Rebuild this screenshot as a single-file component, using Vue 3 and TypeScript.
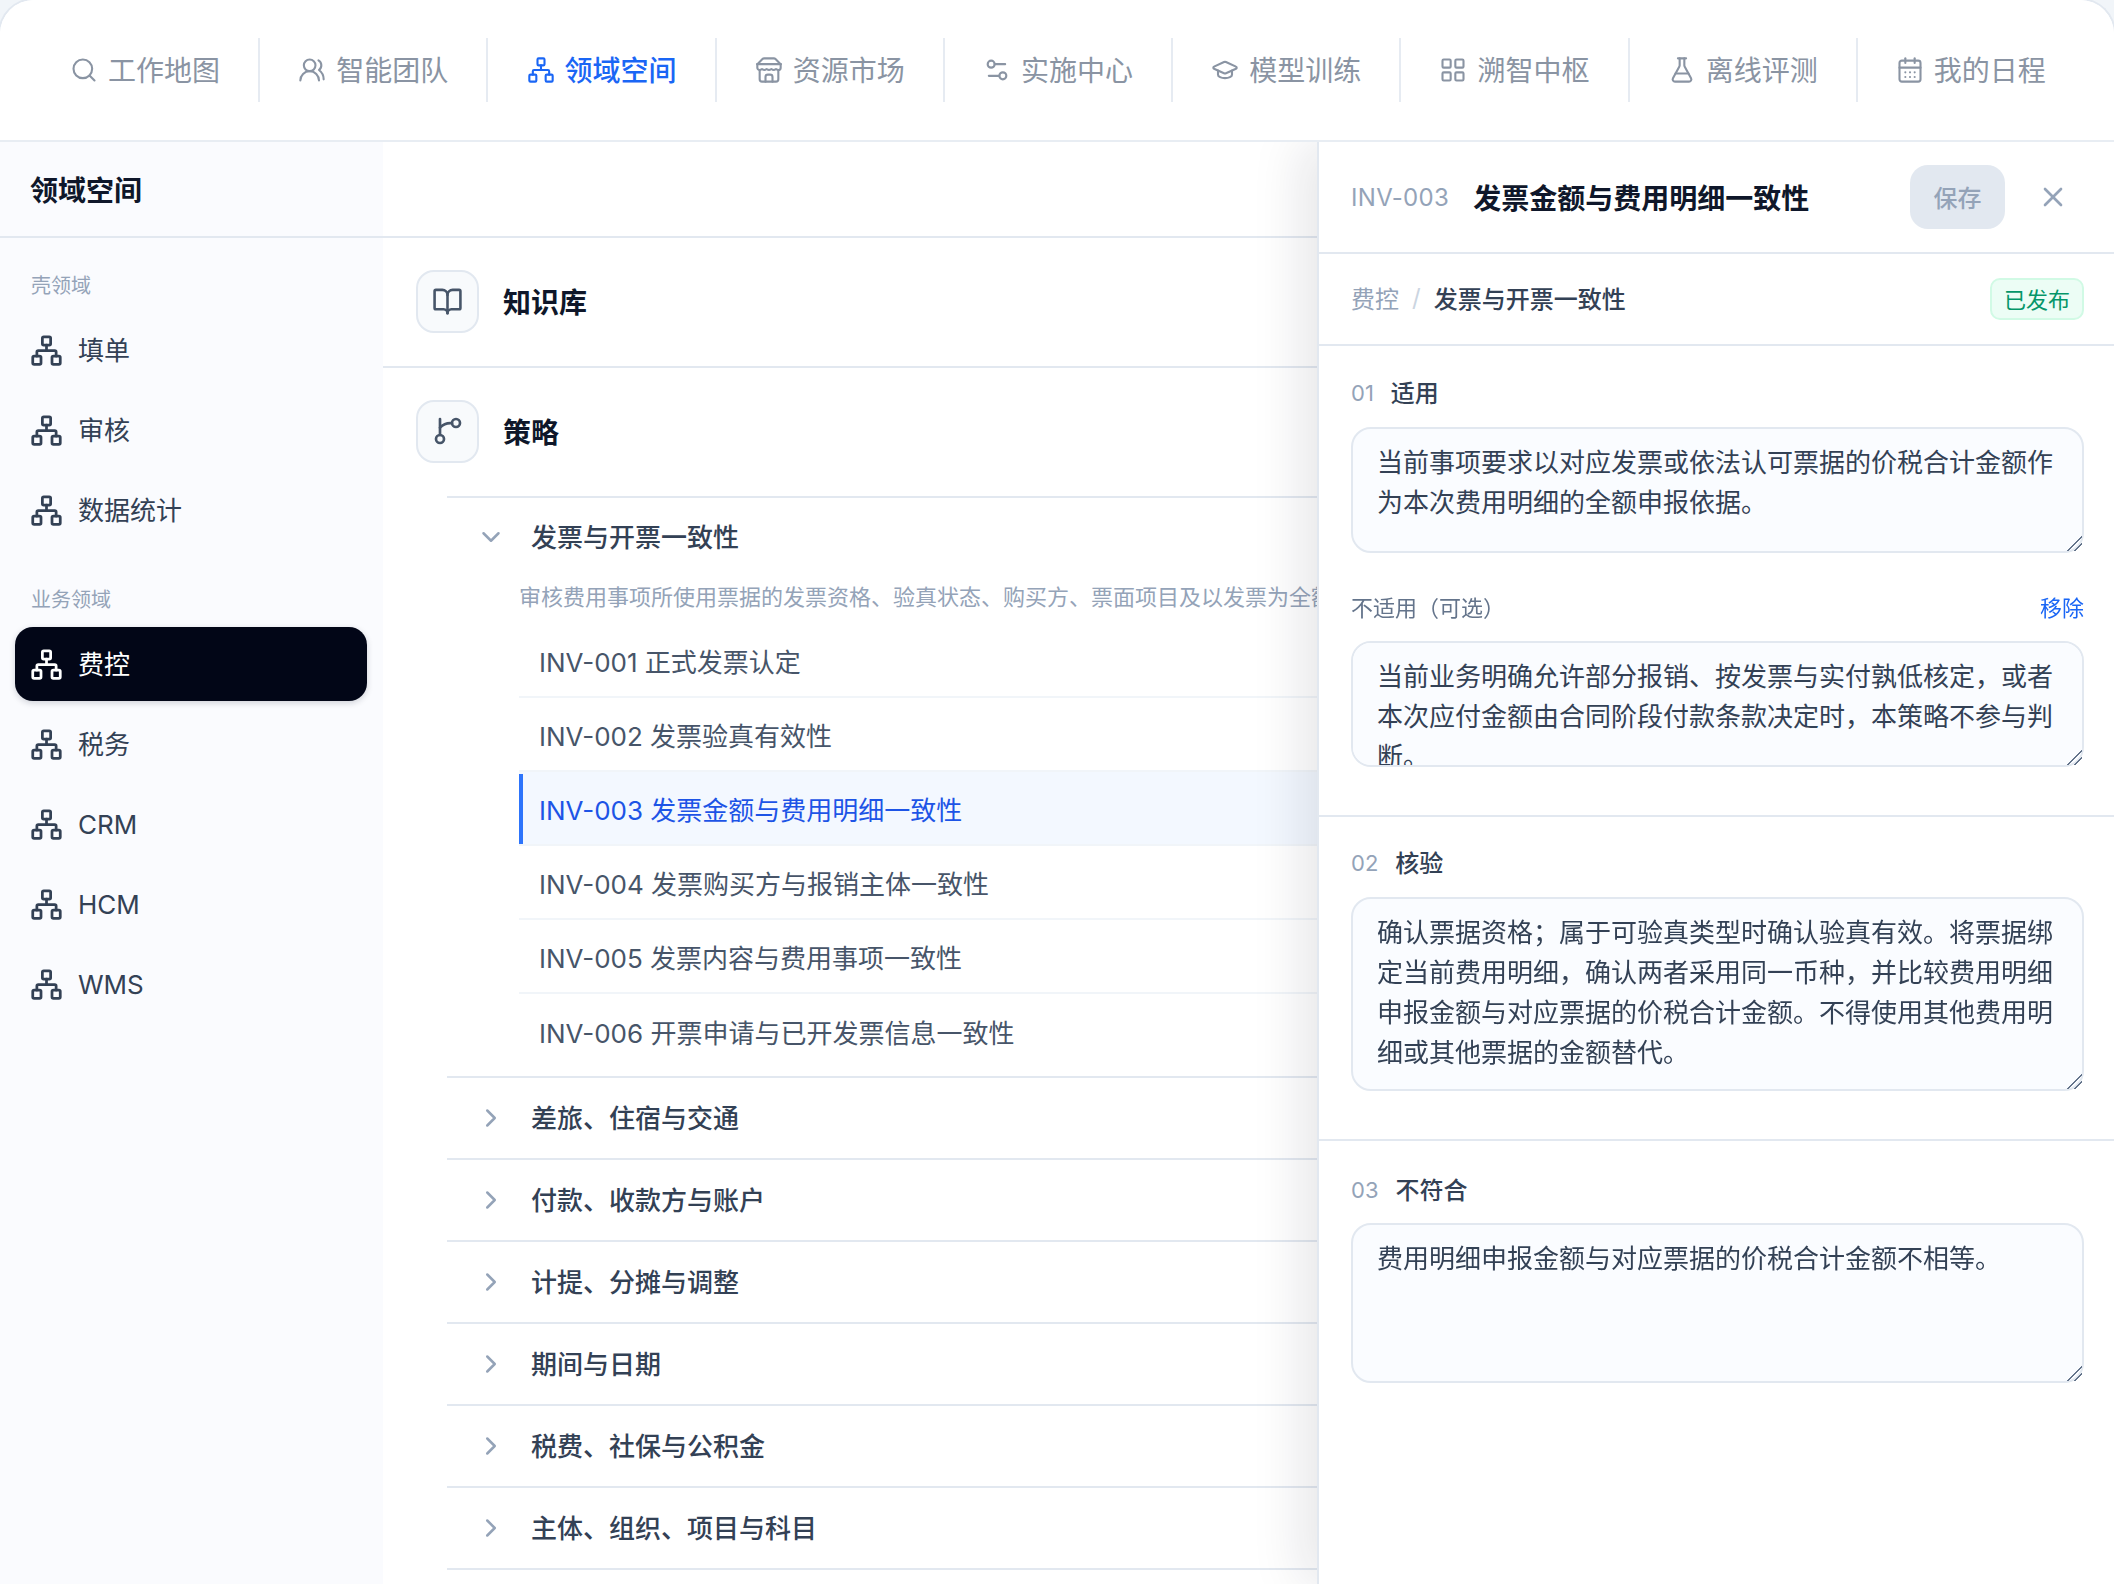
<script setup lang="ts">
import { ref } from 'vue';

interface NavItem {
  label: string;
  icon: string;
  active?: boolean;
}

// lucide-style inner markup, all on a 24 grid
const icons: Record<string, string> = {
  search: '<circle cx="11" cy="11" r="8"/><path d="m21 21-4.3-4.3"/>',
  users:
    '<path d="M18 21a8 8 0 0 0-16 0"/><circle cx="10" cy="8" r="5"/><path d="M22 20c0-3.37-2-6.5-4-8a5 5 0 0 0-.45-8.3"/>',
  network:
    '<rect x="16" y="16" width="6" height="6" rx="1"/><rect x="2" y="16" width="6" height="6" rx="1"/><rect x="9" y="2" width="6" height="6" rx="1"/><path d="M5 16v-3a1 1 0 0 1 1-1h12a1 1 0 0 1 1 1v3"/><path d="M12 12V8"/>',
  store:
    '<path d="m2 7 4.41-4.41A2 2 0 0 1 7.83 2h8.34a2 2 0 0 1 1.42.59L22 7"/><path d="M4 12v8a2 2 0 0 0 2 2h12a2 2 0 0 0 2-2v-8"/><path d="M15 22v-4a2 2 0 0 0-2-2h-2a2 2 0 0 0-2 2v4"/><path d="M2 7h20"/><path d="M22 7v3a2 2 0 0 1-2 2a2.7 2.7 0 0 1-1.59-.63.7.7 0 0 0-.82 0A2.7 2.7 0 0 1 16 12a2.7 2.7 0 0 1-1.59-.63.7.7 0 0 0-.82 0A2.7 2.7 0 0 1 12 12a2.7 2.7 0 0 1-1.59-.63.7.7 0 0 0-.82 0A2.7 2.7 0 0 1 8 12a2.7 2.7 0 0 1-1.59-.63.7.7 0 0 0-.82 0A2.7 2.7 0 0 1 4 12a2 2 0 0 1-2-2V7"/>',
  settings:
    '<path d="M14 17H5"/><path d="M19 7h-9"/><circle cx="17" cy="17" r="3"/><circle cx="7" cy="7" r="3"/>',
  cap: '<path d="M21.42 10.922a1 1 0 0 0-.019-1.838L12.83 5.18a2 2 0 0 0-1.66 0L2.6 9.08a1 1 0 0 0 0 1.832l8.57 3.908a2 2 0 0 0 1.66 0z"/><path d="M6 12.5V16a6 3 0 0 0 12 0v-3.5"/>',
  grid: '<rect x="3" y="3" width="7" height="7" rx="1"/><rect x="14" y="3" width="7" height="7" rx="1"/><rect x="14" y="14" width="7" height="7" rx="1"/><rect x="3" y="14" width="7" height="7" rx="1"/>',
  flask:
    '<path d="M14 2v6a2 2 0 0 0 .245.96l5.51 10.08A2 2 0 0 1 18 22H6a2 2 0 0 1-1.755-2.96l5.51-10.08A2 2 0 0 0 10 8V2"/><path d="M6.453 15h11.094"/><path d="M8.5 2h7"/>',
  calendar:
    '<path d="M8 2v4"/><path d="M16 2v4"/><rect x="3" y="4" width="18" height="18" rx="2"/><path d="M3 10h18"/><path d="M8 14h.01"/><path d="M12 14h.01"/><path d="M16 14h.01"/><path d="M8 18h.01"/><path d="M12 18h.01"/><path d="M16 18h.01"/>',
  book: '<path d="M12 7v14"/><path d="M3 18a1 1 0 0 1-1-1V4a1 1 0 0 1 1-1h5a4 4 0 0 1 4 4 4 4 0 0 1 4-4h5a1 1 0 0 1 1 1v13a1 1 0 0 1-1 1h-6a3 3 0 0 0-3 3 3 3 0 0 0-3-3z"/>',
  branch:
    '<path d="M6 3v12"/><circle cx="6" cy="18" r="3"/><circle cx="18" cy="6" r="3"/><path d="M15 6.2A11 11 0 0 0 6 9.5"/>',
  down: '<path d="m6 9 6 6 6-6"/>',
  right: '<path d="m9 18 6-6-6-6"/>',
  close: '<path d="M18 6 6 18"/><path d="m6 6 12 12"/>',
};

const nav: NavItem[] = [
  { label: '工作地图', icon: 'search' },
  { label: '智能团队', icon: 'users' },
  { label: '领域空间', icon: 'network', active: true },
  { label: '资源市场', icon: 'store' },
  { label: '实施中心', icon: 'settings' },
  { label: '模型训练', icon: 'cap' },
  { label: '溯智中枢', icon: 'grid' },
  { label: '离线评测', icon: 'flask' },
  { label: '我的日程', icon: 'calendar' },
];

const domainGroups = [
  { title: '壳领域', items: ['填单', '审核', '数据统计'] },
  { title: '业务领域', items: ['费控', '税务', 'CRM', 'HCM', 'WMS'] },
];
const currentDomain = ref('费控');
const isLatin = (name: string): boolean => /^[A-Z]+$/.test(name);

const rules = [
  'INV-001 正式发票认定',
  'INV-002 发票验真有效性',
  'INV-003 发票金额与费用明细一致性',
  'INV-004 发票购买方与报销主体一致性',
  'INV-005 发票内容与费用事项一致性',
  'INV-006 开票申请与已开发票信息一致性',
];
const currentRule = ref('INV-003 发票金额与费用明细一致性');

const collapsed = [
  '差旅、住宿与交通',
  '付款、收款方与账户',
  '计提、分摊与调整',
  '期间与日期',
  '税费、社保与公积金',
  '主体、组织、项目与科目',
];

const applicable = ref(
  '当前事项要求以对应发票或依法认可票据的价税合计金额作为本次费用明细的全额申报依据。',
);
const notApplicable = ref(
  '当前业务明确允许部分报销、按发票与实付孰低核定，或者本次应付金额由合同阶段付款条款决定时，本策略不参与判断。',
);
const verify = ref(
  '确认票据资格；属于可验真类型时确认验真有效。将票据绑定当前费用明细，确认两者采用同一币种，并比较费用明细申报金额与对应票据的价税合计金额。不得使用其他费用明细或其他票据的金额替代。',
);
const mismatch = ref('费用明细申报金额与对应票据的价税合计金额不相等。');
</script>

<template>
  <div class="frame">
    <header class="topbar">
      <div v-for="item in nav" :key="item.label" class="nav-item" :class="{ active: item.active }">
        <svg class="nav-icon" viewBox="0 0 24 24" v-html="icons[item.icon]" />
        <span class="nav-text">{{ item.label }}</span>
      </div>
    </header>

    <div class="body">
      <aside class="sidebar">
        <div class="side-title">领域空间</div>
        <div class="side-groups">
          <div v-for="group in domainGroups" :key="group.title" class="side-group">
            <div class="side-label">{{ group.title }}</div>
            <div
              v-for="name in group.items"
              :key="name"
              class="side-item"
              :class="{ active: name === currentDomain }"
            >
              <svg class="side-icon" viewBox="0 0 24 24" v-html="icons.network" />
              <span :class="{ 'cjk-lift': !isLatin(name) }">{{ name }}</span>
            </div>
          </div>
        </div>
      </aside>

      <main class="main">
        <div class="toolbar" />
        <div class="kind-row">
          <span class="kind-box"><svg class="book" viewBox="0 0 24 24" v-html="icons.book" /></span>
          <span class="kind-name">知识库</span>
        </div>
        <div class="kind-row no-line">
          <span class="kind-box"><svg class="branch" viewBox="0 0 24 24" v-html="icons.branch" /></span>
          <span class="kind-name">策略</span>
        </div>

        <div class="tree">
          <div class="tree-group open">
            <div class="tree-head">
              <svg class="chevron" viewBox="0 0 24 24" v-html="icons.down" />
              <span class="cjk-lift">发票与开票一致性</span>
            </div>
            <div class="tree-desc">审核费用事项所使用票据的发票资格、验真状态、购买方、票面项目及以发票为全额</div>
            <div class="rule-list">
              <div
                v-for="rule in rules"
                :key="rule"
                class="rule"
                :class="{ active: rule === currentRule }"
              >
                {{ rule }}
              </div>
            </div>
          </div>
          <div v-for="name in collapsed" :key="name" class="tree-group">
            <div class="tree-head">
              <svg class="chevron" viewBox="0 0 24 24" v-html="icons.right" />
              <span class="cjk-lift">{{ name }}</span>
            </div>
          </div>
        </div>
      </main>

      <section class="panel">
        <div class="panel-head">
          <span class="panel-code">INV-003</span>
          <span class="panel-title">发票金额与费用明细一致性</span>
          <button class="save" disabled>保存</button>
          <svg class="close" viewBox="0 0 24 24" v-html="icons.close" />
        </div>
        <div class="crumbs">
          <span class="crumb-root cjk-lift">费控</span>
          <span class="crumb-sep cjk-lift">/</span>
          <span class="crumb-leaf cjk-lift">发票与开票一致性</span>
          <span class="badge">已发布</span>
        </div>

        <div class="sec">
          <div class="sec-label"><span class="sec-no">01</span><span class="sec-name">适用</span></div>
          <textarea v-model="applicable" class="field short" />
          <div class="opt-label">
            <span class="cjk-lift">不适用（可选）</span><span class="remove cjk-lift">移除</span>
          </div>
          <textarea v-model="notApplicable" class="field short" />
        </div>
        <div class="sec">
          <div class="sec-label"><span class="sec-no">02</span><span class="sec-name">核验</span></div>
          <textarea v-model="verify" class="field tall" />
        </div>
        <div class="sec last">
          <div class="sec-label"><span class="sec-no">03</span><span class="sec-name">不符合</span></div>
          <textarea v-model="mismatch" class="field mid" />
        </div>
      </section>
    </div>
  </div>
</template>

<style>
html,
body {
  margin: 0;
  background: #f1f5f9;
  overflow: hidden;
}
</style>

<style scoped>
* {
  box-sizing: border-box;
}
svg {
  fill: none;
  stroke: currentColor;
  stroke-width: 2;
  stroke-linecap: round;
  stroke-linejoin: round;
  flex: none;
  display: block;
}
/* Noto's CJK glyphs sit lower on Inter's baseline than the original face */
.cjk-lift {
  margin-bottom: 4px;
}
.frame {
  margin: -2px -2px 0;
  height: 1586px;
  display: flex;
  flex-direction: column;
  overflow: hidden;
  background: #fff;
  border: 2px solid #e2e8f0;
  border-bottom: 0;
  border-radius: 36px 36px 0 0;
  font-family: Inter, 'Noto Sans CJK SC', sans-serif;
  color: #334155;
}
.topbar {
  position: relative;
  z-index: 3;
  flex: none;
  height: 142px;
  padding: 0 30px 0 32px;
  display: flex;
  align-items: center;
  background: #fff;
  border-bottom: 2px solid #e8edf3;
}
.nav-item {
  flex: 1;
  height: 64px;
  display: flex;
  align-items: center;
  justify-content: center;
  gap: 10px;
  font-size: 28px;
  color: #8a94a3;
  border-right: 2px solid #e6ebf2;
}
.nav-item:last-child {
  border-right: 0;
}
.nav-item.active {
  color: #1a66f5;
  font-weight: 500;
}
.nav-text {
  margin-bottom: 2px;
}
.nav-icon {
  width: 28px;
  height: 28px;
  stroke-width: 1.8;
}
.body {
  flex: 1;
  min-height: 0;
  display: flex;
}
.sidebar {
  flex: none;
  width: 383px;
  background: #fafbfe;
}
.side-title {
  height: 96px;
  padding-left: 30px;
  display: flex;
  align-items: center;
  font-size: 28px;
  font-weight: 600;
  color: #0f172a;
  border-bottom: 2px solid #e2e8f0;
}
.side-groups {
  padding: 34px 16px 0 15px;
  display: flex;
  flex-direction: column;
  gap: 39px;
}
.side-group {
  display: flex;
  flex-direction: column;
  gap: 6px;
}
.side-label {
  height: 28px;
  line-height: 28px;
  margin-bottom: 7px;
  padding-left: 16px;
  font-size: 20px;
  color: #94a3b8;
}
.side-item {
  height: 74px;
  padding-left: 15px;
  display: flex;
  align-items: center;
  gap: 15px;
  border-radius: 18px;
  font-size: 26px;
  color: #334155;
}
.side-item.active {
  background: #020617;
  color: #fff;
  box-shadow: 0 2px 6px rgba(15, 23, 42, 0.18);
}
.side-icon {
  width: 33px;
  height: 33px;
  stroke-width: 2;
}
.main {
  flex: 1;
  min-width: 0;
  overflow: hidden;
}
.toolbar {
  height: 96px;
  border-bottom: 2px solid #e2e8f0;
}
.kind-row {
  height: 130px;
  padding: 0 0 2px 33px;
  display: flex;
  align-items: center;
  gap: 24px;
  border-bottom: 2px solid #e2e8f0;
}
.kind-row.no-line {
  border-bottom: 0;
  height: 128px;
}
.kind-box {
  width: 63px;
  height: 63px;
  display: flex;
  align-items: center;
  justify-content: center;
  background: #f8fafc;
  border: 2px solid #e2e8f0;
  border-radius: 18px;
  color: #475569;
}
.book {
  width: 31px;
  height: 31px;
}
.branch {
  width: 32px;
  height: 32px;
}
.kind-name {
  font-size: 28px;
  font-weight: 600;
  color: #0f172a;
}
.tree {
  margin-left: 64px;
  border-top: 2px solid #e2e8f0;
}
.tree-group {
  border-bottom: 2px solid #e2e8f0;
}
.tree-group.open {
  padding-bottom: 8px;
}
.tree-head {
  height: 80px;
  padding-left: 29px;
  display: flex;
  align-items: center;
  gap: 25px;
  font-size: 26px;
  font-weight: 500;
  color: #334155;
}
.tree-group.open .tree-head {
  height: 78px;
}
.chevron {
  width: 30px;
  height: 30px;
  color: #94a3b8;
}
.tree-desc {
  height: 48px;
  line-height: 42px;
  margin-left: 72px;
  font-size: 22px;
  color: #94a3b8;
  white-space: nowrap;
}
.rule-list {
  margin-left: 72px;
}
.rule {
  position: relative;
  height: 74px;
  padding-left: 20px;
  display: flex;
  align-items: center;
  font-size: 26px;
  color: #475569;
  border-bottom: 2px solid #f1f5f9;
  white-space: nowrap;
}
.rule:last-child {
  border-bottom: 0;
}
.rule.active {
  background: #f3f8ff;
  color: #1d54e6;
}
.rule.active::before {
  content: '';
  position: absolute;
  left: 0;
  top: 2px;
  bottom: 0;
  width: 4px;
  background: #2d74fb;
}
.panel {
  position: relative;
  z-index: 2;
  flex: none;
  width: 797px;
  background: #fff;
  border-left: 2px solid #e2e8f0;
  box-shadow: -16px 0 48px rgba(15, 23, 42, 0.1);
}
.panel-head {
  height: 112px;
  padding: 0 45px 0 32px;
  display: flex;
  align-items: center;
  border-bottom: 2px solid #e2e8f0;
}
.panel-code {
  font-size: 24px;
  letter-spacing: 0.3px;
  color: #94a3b8;
}
.panel-title {
  margin-left: 24px;
  font-size: 28px;
  font-weight: 600;
  color: #0f172a;
}
.save {
  margin-left: auto;
  width: 95px;
  height: 64px;
  padding: 0 0 2px;
  border: 0;
  border-radius: 18px;
  background: #e2e8f0;
  color: #94a3b8;
  font-family: inherit;
  font-size: 24px;
  font-weight: 500;
}
.close {
  margin-left: 32px;
  width: 32px;
  height: 32px;
  color: #94a3b8;
}
.crumbs {
  height: 92px;
  padding: 0 30px 0 32px;
  display: flex;
  align-items: center;
  font-size: 24px;
  border-bottom: 2px solid #e2e8f0;
}
.crumb-root {
  color: #94a3b8;
}
.crumb-sep {
  margin: 0 13px 4px;
  color: #cbd5e1;
}
.crumb-leaf {
  font-weight: 500;
  color: #334155;
}
.badge {
  margin-left: auto;
  height: 42px;
  padding: 0 12px 2px;
  display: flex;
  align-items: center;
  background: #ecfdf5;
  border: 2px solid #d1fae5;
  border-radius: 10px;
  font-size: 22px;
  color: #059669;
}
.sec {
  padding: 31px 30px 48px 32px;
  border-bottom: 2px solid #e2e8f0;
}
.sec + .sec {
  padding-top: 30px;
}
.sec.last {
  padding-top: 33px;
  border-bottom: 0;
}
.sec-label {
  height: 32px;
  margin-bottom: 18px;
  display: flex;
  align-items: center;
  gap: 17px;
  font-size: 24px;
  font-weight: 500;
  color: #334155;
}
.sec.last .sec-label {
  margin-bottom: 17px;
}
.sec-no {
  font-size: 22px;
  font-weight: 400;
  color: #94a3b8;
}
.sec-name {
  margin-bottom: 3px;
}
.opt-label {
  height: 32px;
  margin: 39px 0 17px;
  display: flex;
  align-items: center;
  justify-content: space-between;
  font-size: 22px;
  color: #64748b;
}
.remove {
  color: #1a66f5;
}
.field {
  display: block;
  width: 100%;
  padding: 14px 24px;
  background: #fafcff;
  border: 2px solid #e2e8f0;
  border-radius: 20px;
  font-family: inherit;
  font-size: 26px;
  line-height: 40px;
  color: #334155;
  outline: none;
  scrollbar-width: none;
}
.field::-webkit-resizer {
  background: linear-gradient(
    135deg,
    transparent 47%,
    #64748b 48%,
    #64748b 54%,
    transparent 55%,
    transparent 72%,
    #64748b 73%,
    #64748b 79%,
    transparent 80%
  );
}
.field.short {
  height: 126px;
}
.field.tall {
  height: 194px;
}
.field.mid {
  height: 160px;
}
</style>
